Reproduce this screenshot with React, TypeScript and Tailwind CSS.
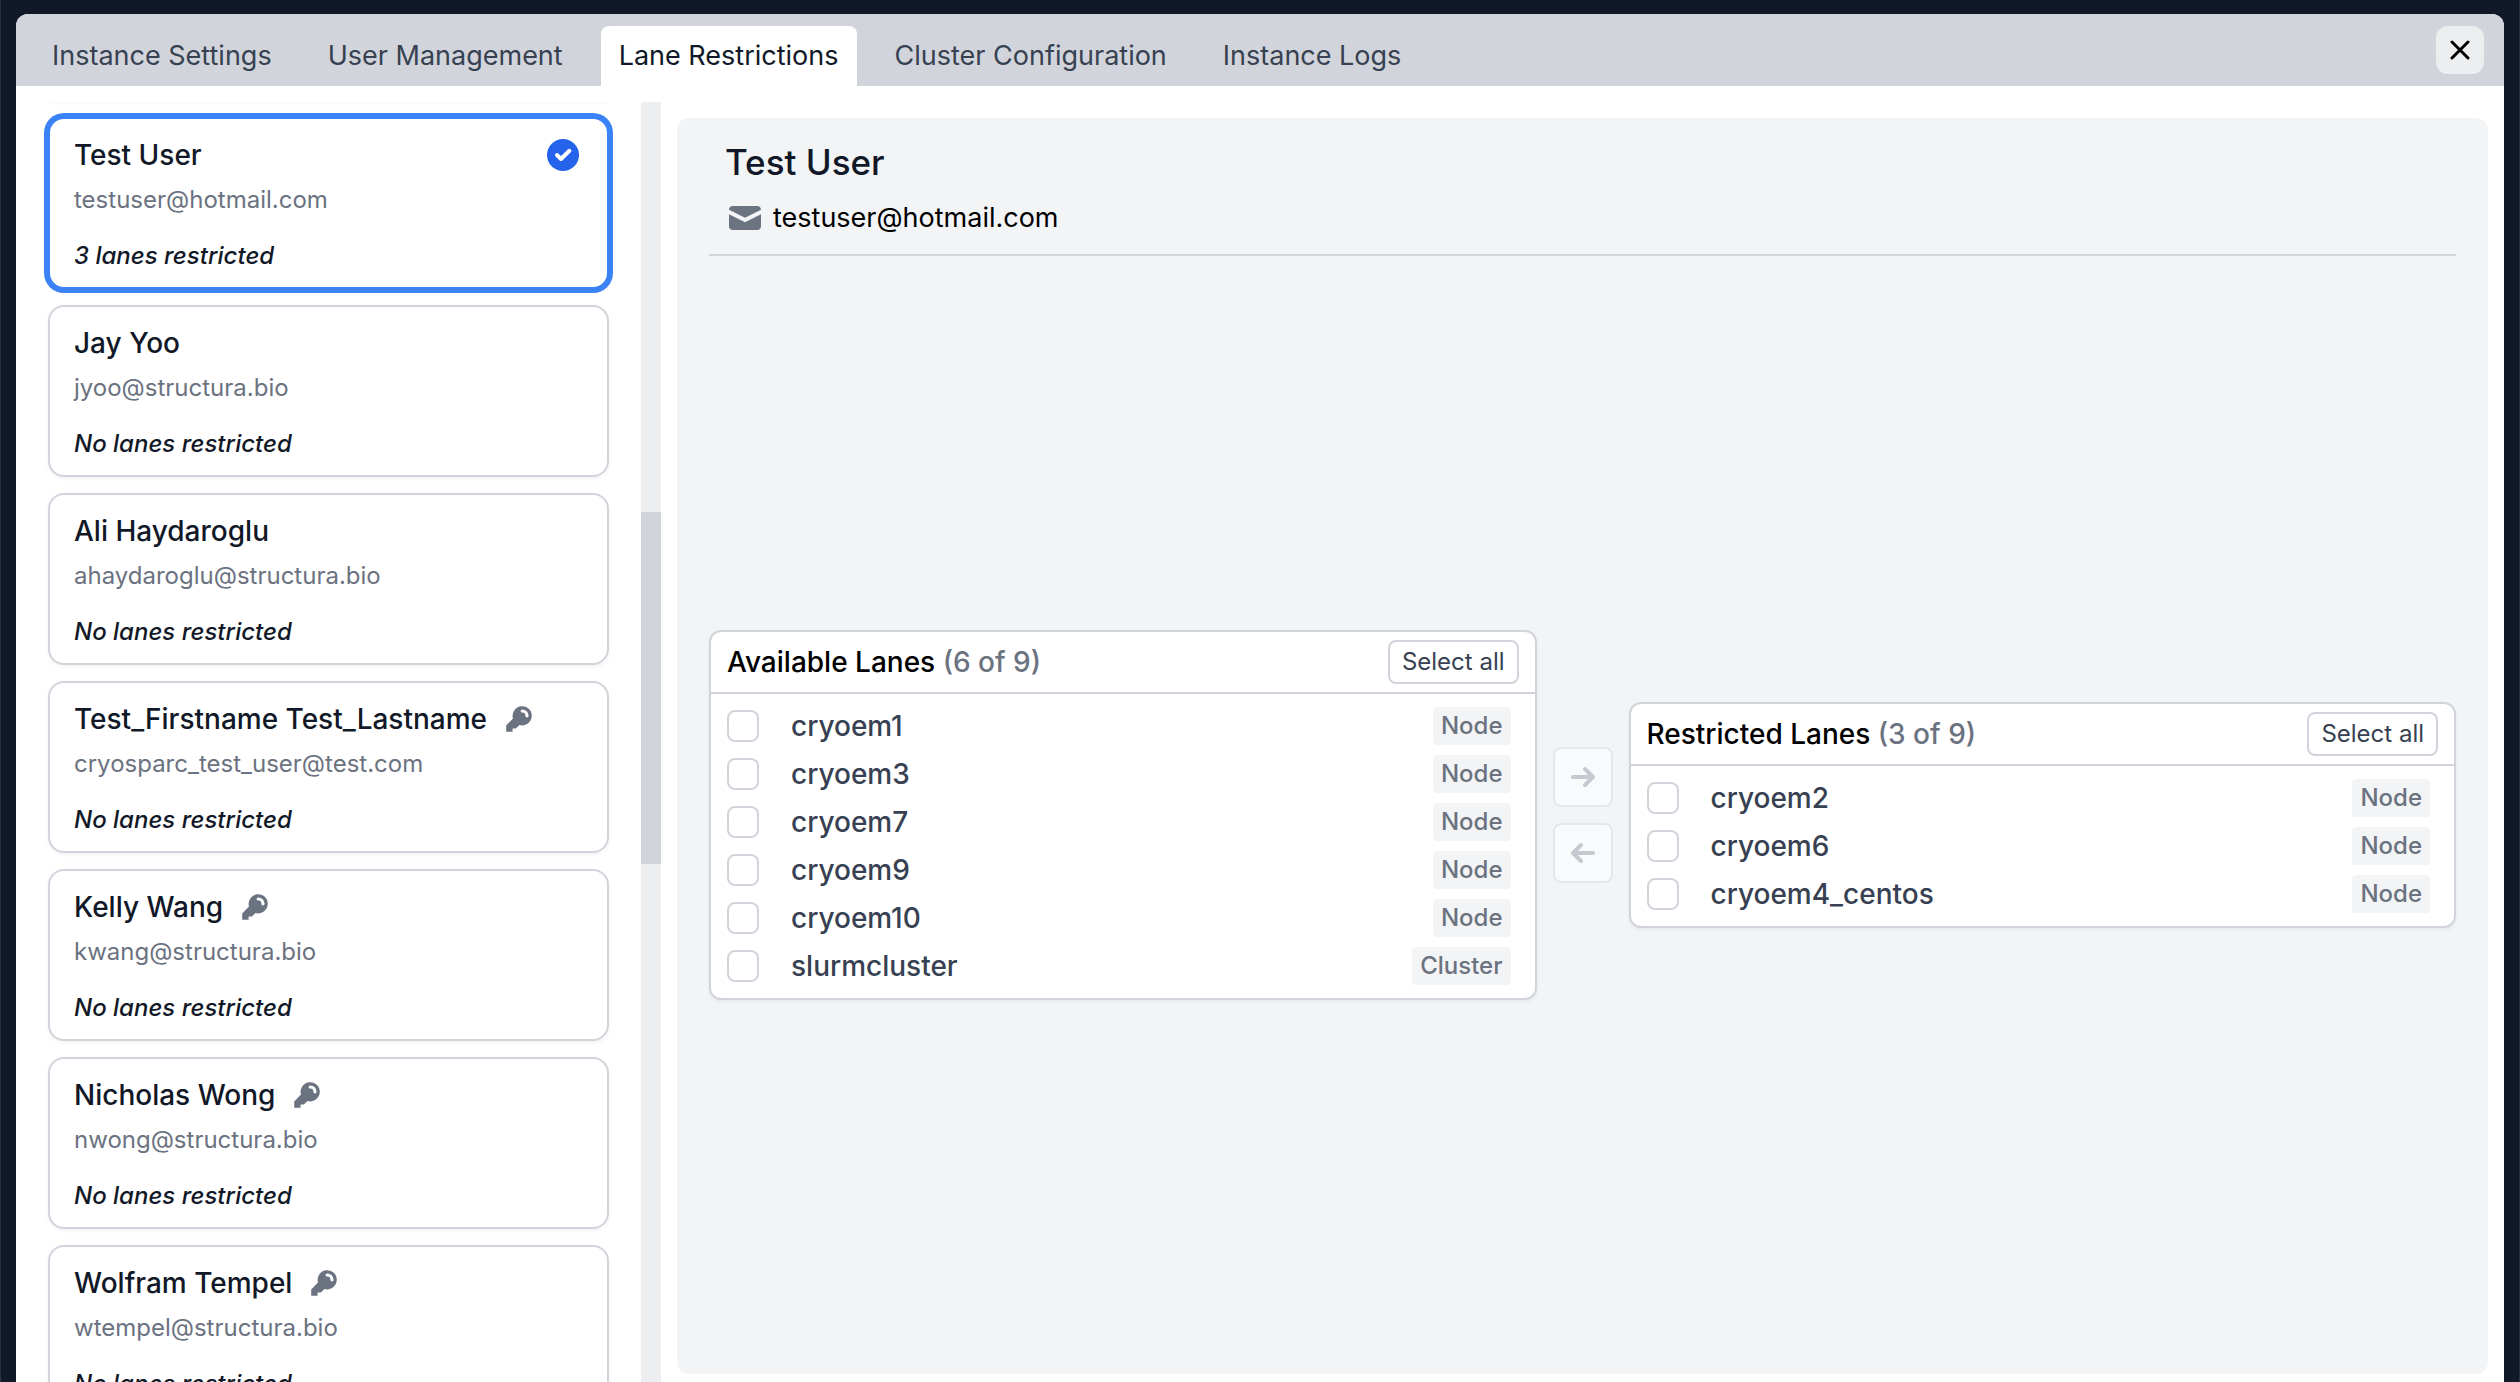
import React, { useState } from 'react';

interface User {
  name: string;
  email: string;
  restricted: number;
  admin: boolean;
}

interface Lane {
  name: string;
  type: 'Node' | 'Cluster';
}

const TABS = [
  'Instance Settings',
  'User Management',
  'Lane Restrictions',
  'Cluster Configuration',
  'Instance Logs',
];

const USERS: User[] = [
  { name: 'Test User', email: 'testuser@hotmail.com', restricted: 3, admin: false },
  { name: 'Jay Yoo', email: 'jyoo@structura.bio', restricted: 0, admin: false },
  { name: 'Ali Haydaroglu', email: 'ahaydaroglu@structura.bio', restricted: 0, admin: false },
  { name: 'Test_Firstname Test_Lastname', email: 'cryosparc_test_user@test.com', restricted: 0, admin: true },
  { name: 'Kelly Wang', email: 'kwang@structura.bio', restricted: 0, admin: true },
  { name: 'Nicholas Wong', email: 'nwong@structura.bio', restricted: 0, admin: true },
  { name: 'Wolfram Tempel', email: 'wtempel@structura.bio', restricted: 0, admin: true },
];

const AVAILABLE: Lane[] = [
  { name: 'cryoem1', type: 'Node' },
  { name: 'cryoem3', type: 'Node' },
  { name: 'cryoem7', type: 'Node' },
  { name: 'cryoem9', type: 'Node' },
  { name: 'cryoem10', type: 'Node' },
  { name: 'slurmcluster', type: 'Cluster' },
];

const RESTRICTED: Lane[] = [
  { name: 'cryoem2', type: 'Node' },
  { name: 'cryoem6', type: 'Node' },
  { name: 'cryoem4_centos', type: 'Node' },
];

const TOTAL_LANES = AVAILABLE.length + RESTRICTED.length;

function KeyIcon() {
  return (
    <svg viewBox="0 0 20 20" fill="currentColor" className="size-8 text-[#6b7280]">
      <path
        fillRule="evenodd"
        clipRule="evenodd"
        d="M18 8a6 6 0 01-7.743 5.743L10 14l-1 1-1 1H6v2H2v-4l4.257-4.257A6 6 0 1118 8zm-6-4a1 1 0 100 2 2 2 0 012 2 1 1 0 102 0 4 4 0 00-4-4z"
      />
    </svg>
  );
}

function MailIcon() {
  return (
    <svg viewBox="0 0 20 20" fill="currentColor" className="size-10 text-[#6b7280]">
      <path d="M2.003 5.884L10 9.882l7.997-3.998A2 2 0 0016 4H4a2 2 0 00-1.997 1.884z" />
      <path d="M18 8.118l-8 4-8-4V14a2 2 0 002 2h12a2 2 0 002-2V8.118z" />
    </svg>
  );
}

function CheckBadge() {
  return (
    <svg viewBox="0 0 32 32" className="size-8">
      <circle cx="16" cy="16" r="16" fill="#2563eb" />
      <path
        d="M10 16l4 4 8.400-8.200"
        fill="none"
        stroke="#fff"
        strokeWidth="4"
        strokeLinecap="round"
        strokeLinejoin="round"
      />
    </svg>
  );
}

function ArrowIcon({ flip = false }: { flip?: boolean }) {
  return (
    <svg
      viewBox="0 0 24 24"
      fill="none"
      stroke="currentColor"
      strokeWidth="4"
      strokeLinecap="round"
      strokeLinejoin="round"
      className="size-6"
    >
      <path d={flip ? 'M22 12H3M10 4l-8 8 8 8' : 'M2 12h19M14 4l8 8-8 8'} />
    </svg>
  );
}

function UserCard({ user, selected, onSelect }: { user: User; selected: boolean; onSelect: () => void }) {
  return (
    <button
      onClick={onSelect}
      className={`block w-full shrink-0 text-left bg-white border-2 rounded-2xl px-6 pt-4 pb-[15px]
        ${selected
          ? 'border-[#3b82f6] ring-4 ring-[#3b82f6]'
          : 'border-[#d1d5db] shadow-[0_2px_4px_0_rgba(0,0,0,0.05)]'
        }`}
    >
      <span className="flex items-center justify-between h-10 pr-1">
        <span className="flex items-center gap-4 text-[28px] font-medium text-[#111827]">
          {user.name}
          {user.admin && <KeyIcon />}
        </span>
        {selected && <CheckBadge />}
      </span>
      <span className="block mt-[9px] text-2xl leading-8 text-[#6b7280]">{user.email}</span>
      <span className="block mt-6 text-2xl leading-8 font-medium italic text-[#111827]">
        {user.restricted > 0 ? `${user.restricted} lanes restricted` : 'No lanes restricted'}
      </span>
    </button>
  );
}

function LaneBox({ title, lanes }: { title: string; lanes: Lane[] }) {
  return (
    <section className="flex-1 bg-white border-2 border-[#d1d5db] rounded-xl shadow-[0_2px_4px_0_rgba(0,0,0,0.05)]">
      <div className="flex items-center justify-between px-4 py-2 border-b-2 border-[#d1d5db]">
        <h3 className="text-[28px] leading-10 font-medium text-black">
          {title}{' '}
          <span className="text-[#6b7280]">
            ({lanes.length} of {TOTAL_LANES})
          </span>
        </h3>
        <button className="h-11 px-3 text-2xl leading-8 text-[#374151] border-2 border-[#d1d5db] rounded-lg">
          Select all
        </button>
      </div>
      <ul className="py-2">
        {lanes.map((lane) => (
          <li key={lane.name} className="flex items-center justify-between h-12 pl-4 pr-6">
            <label className="flex items-center gap-8 text-[28px] leading-10 font-medium text-[#374151]">
              <input
                type="checkbox"
                className="appearance-none size-8 bg-white border-2 border-[#d1d5db] rounded-lg checked:bg-[#2563eb]"
              />
              {lane.name}
            </label>
            <span className="px-2 py-[3px] text-2xl leading-8 font-medium text-[#6b7280] bg-[#f3f4f6] rounded-sm">
              {lane.type}
            </span>
          </li>
        ))}
      </ul>
    </section>
  );
}

export default function App() {
  const [activeTab, setActiveTab] = useState('Lane Restrictions');
  const [selected, setSelected] = useState(0);
  const user = USERS[selected];

  return (
    <div className="h-screen overflow-hidden bg-[#111827] border-x border-[#283140] px-[15px] pt-[14px] font-['Inter',sans-serif]">
      <div className="flex flex-col h-full bg-white rounded-t-xl overflow-hidden">
        {/* Tab bar */}
        <header className="flex items-end justify-between h-[72px] shrink-0 pl-[18px] pr-5 bg-[#d1d5db]">
          <nav className="flex gap-5">
            {TABS.map((tab) => (
              <button
                key={tab}
                onClick={() => setActiveTab(tab)}
                className={`h-[60px] px-[18px] text-[27px] leading-10 rounded-t-lg
                  ${tab === activeTab ? 'bg-white text-[#111827]' : 'text-[#374151]'}`}
              >
                {tab}
              </button>
            ))}
          </nav>
          <button
            aria-label="Close"
            className="flex items-center justify-center size-12 mb-3 rounded-xl bg-[#edeef0] text-black"
          >
            <svg viewBox="0 0 20 20" fill="none" stroke="currentColor" strokeWidth="3" strokeLinecap="round" className="size-5">
              <path d="M2 2l16 16M18 2L2 18" />
            </svg>
          </button>
        </header>

        <div className="flex flex-1 min-h-0">
          {/* User list */}
          <aside className="flex w-[645px] shrink-0 mt-4">
            <div className="flex-1 flex flex-col gap-4 px-8 overflow-hidden">
              {/* bottom edge of the card scrolled out above */}
              <div className="h-4 -mt-[17px] shrink-0 rounded-2xl shadow-[0_2px_4px_0_rgba(0,0,0,0.05)]" />
              {USERS.map((u, i) => (
                <UserCard key={u.email} user={u} selected={i === selected} onSelect={() => setSelected(i)} />
              ))}
            </div>
            <div className="w-5 bg-[#edeef0]">
              <div className="mt-[410px] h-[352px] bg-[#d1d5db]" />
            </div>
          </aside>

          {/* Selected user */}
          <main className="flex-1 flex flex-col mt-8 mb-2 ml-4 mr-4 px-8 bg-[#f3f4f6] rounded-xl">
            <div className="px-4 pt-6 pb-4 border-b-2 border-[#d1d5db]">
              <h2 className="text-[35px] leading-10 font-medium text-[#111827]">{user.name}</h2>
              <p className="flex items-center gap-2 mt-4 text-[27px] leading-10 text-black">
                <MailIcon />
                {user.email}
              </p>
            </div>
            <div className="flex-1 flex items-center gap-4">
              <LaneBox title="Available Lanes" lanes={AVAILABLE} />
              <div className="flex flex-col gap-4">
                <button
                  disabled
                  aria-label="Restrict selected lanes"
                  className="flex items-center justify-center size-[60px] border-2 border-[#e5e7eb] rounded-lg bg-[#f9fafb] text-[#c5cad1]"
                >
                  <ArrowIcon />
                </button>
                <button
                  disabled
                  aria-label="Make selected lanes available"
                  className="flex items-center justify-center size-[60px] border-2 border-[#e5e7eb] rounded-lg bg-[#f9fafb] text-[#c5cad1]"
                >
                  <ArrowIcon flip />
                </button>
              </div>
              <LaneBox title="Restricted Lanes" lanes={RESTRICTED} />
            </div>
          </main>
        </div>
      </div>
    </div>
  );
}
